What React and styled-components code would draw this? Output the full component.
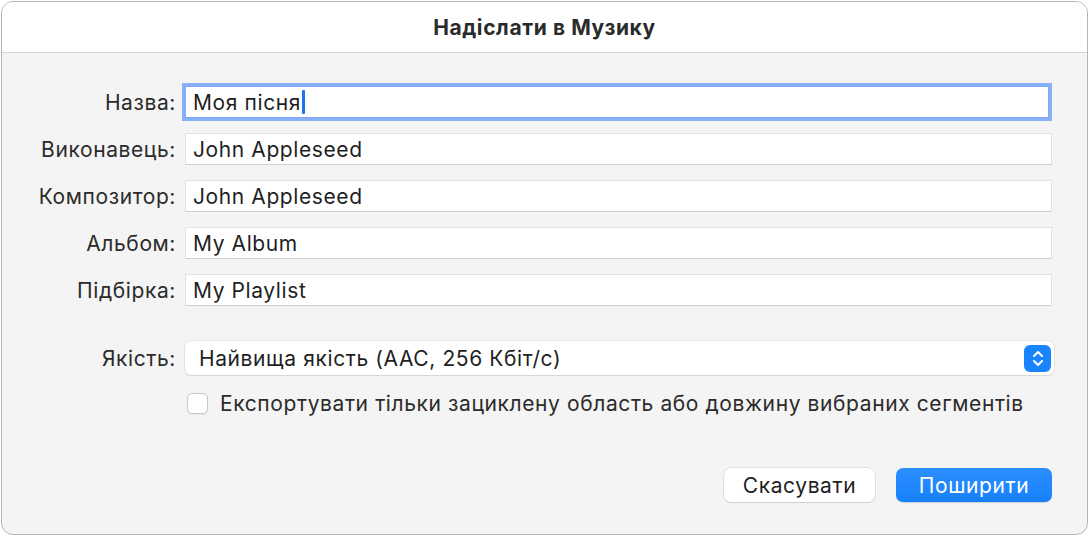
import * as React from "react";
import styled, { createGlobalStyle } from "styled-components";

const Global = createGlobalStyle`
  html, body { margin: 0; background: #fff; }
  body { font-family: "Inter", "Liberation Sans", sans-serif; letter-spacing: 0.6px; }
`;

const Window = styled.div`
  width: 1087px;
  height: 534px;
  margin: 1px 0 0 1px;
  box-sizing: border-box;
  border: 1px solid #b5b5b5;
  border-radius: 12px;
  overflow: hidden;
  display: flex;
  flex-direction: column;
  background: #f4f4f4;
`;

const TitleBar = styled.div`
  height: 50px;
  flex: none;
  background: #fff;
  border-bottom: 1px solid #d4d4d4;
  display: flex;
  align-items: center;
  justify-content: center;
  font-size: 21px;
  font-weight: 700;
  color: #2b2b2b;
`;

const Body = styled.div`
  flex: 1;
  padding: 33px 35px 0 0;
  display: flex;
  flex-direction: column;
`;

const Form = styled.div`
  display: grid;
  grid-template-columns: 174px 1fr;
  column-gap: 9px;
  row-gap: 15px;
  align-items: center;
`;

const Label = styled.div`
  text-align: right;
  font-size: 21px;
  color: #2b2b2b;
`;

const Field = styled.div`
  height: 32px;
  box-sizing: border-box;
  background: #fff;
  border: 1px solid ${(p) => (p.$focus ? "#7eaaf5" : "#e2e2e2")};
  box-shadow: ${(p) => (p.$focus ? "0 0 0 3px #87b0f6" : "none")};
  border-bottom-color: ${(p) => (p.$focus ? "#7eaaf5" : "#cfcfcf")};
  padding: 0 7px;
  display: flex;
  align-items: center;
  font-size: 21px;
  color: #1f1f1f;
  margin-right: ${(p) => (p.$focus ? "3px" : "0")};
`;

const Caret = styled.span`
  display: inline-block;
  width: 3px;
  height: 24px;
  background: #1a73f0;
  border-radius: 1px;
  margin-left: 1px;
`;

const Select = styled.div`
  height: 34px;
  box-sizing: border-box;
  background: #fff;
  border-radius: 6px;
  box-shadow: 0 0 0 0.5px #d6d6d6, 0 1px 1px rgba(0, 0, 0, 0.12);
  display: flex;
  align-items: center;
  justify-content: space-between;
  padding: 0 3px 0 14px;
  font-size: 21px;
  color: #1f1f1f;
  margin-right: -2px;
`;

const Stepper = styled.div`
  width: 27px;
  height: 27px;
  border-radius: 6px;
  background: #1a84ff;
  display: flex;
  align-items: center;
  justify-content: center;
`;

const CheckRow = styled.label`
  display: flex;
  align-items: center;
  gap: 12px;
  font-size: 21px;
  color: #2b2b2b;
  margin-top: 1px;
  padding-left: 2px;
`;

const Box = styled.span`
  width: 21px;
  height: 21px;
  box-sizing: border-box;
  border-radius: 5px;
  background: #fff;
  border: 1px solid #c8c8c8;
  box-shadow: 0 1px 1px rgba(0, 0, 0, 0.06);
`;

const Buttons = styled.div`
  display: flex;
  justify-content: flex-end;
  gap: 21px;
  margin-top: 52px;
`;

const Button = styled.button`
  height: 34px;
  padding: 0 18px;
  min-width: ${(p) => p.$w}px;
  border-radius: 7px;
  border: none;
  font-family: inherit;
  letter-spacing: inherit;
  font-size: 21px;
  color: ${(p) => (p.$primary ? "#fff" : "#1f1f1f")};
  background: ${(p) => (p.$primary ? "linear-gradient(#2d8fff, #1680fb)" : "#fff")};
  box-shadow: ${(p) =>
    p.$primary ? "0 1px 1px rgba(0,0,0,0.15)" : "0 0 0 0.5px #cfcfcf, 0 1px 1px rgba(0,0,0,0.15)"};
`;

const rows = [
  ["Виконавець:", "John Appleseed"],
  ["Композитор:", "John Appleseed"],
  ["Альбом:", "My Album"],
  ["Підбірка:", "My Playlist"],
];

export default function App() {
  return (
    <>
      <Global />
      <Window>
        <TitleBar>Надіслати в Музику</TitleBar>
        <Body>
          <Form>
            <Label>Назва:</Label>
            <Field $focus>
              Моя пісня
              <Caret />
            </Field>
            {rows.map(([l, v]) => (
              <React.Fragment key={l}>
                <Label>{l}</Label>
                <Field>{v}</Field>
              </React.Fragment>
            ))}
            <Label style={{ marginTop: 20 }}>Якість:</Label>
            <Select style={{ marginTop: 20 }}>
              Найвища якість (AAC, 256 Кбіт/с)
              <Stepper>
                <svg width="12" height="19" viewBox="0 0 12 19" fill="none" stroke="#fff" strokeWidth="2" strokeLinecap="round" strokeLinejoin="round">
                  <path d="M2 7l4-4 4 4M2 12l4 4 4-4" />
                </svg>
              </Stepper>
            </Select>
            <div />
            <CheckRow>
              <Box />
              Експортувати тільки зациклену область або довжину вибраних сегментів
            </CheckRow>
          </Form>
          <Buttons>
            <Button $w={151}>Скасувати</Button>
            <Button $primary $w={156}>Поширити</Button>
          </Buttons>
        </Body>
      </Window>
    </>
  );
}
